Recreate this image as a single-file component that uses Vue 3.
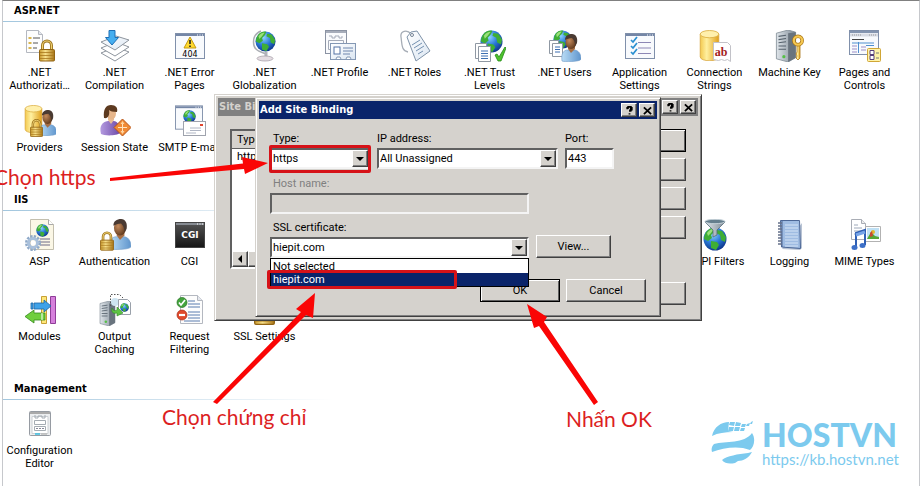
<script setup>
import { ref } from 'vue'

const groups = [
  {
    title: 'ASP.NET',
    items: [
      { icon: 'authorization', lines: ['.NET', 'Authorizati…'] },
      { icon: 'compilation', lines: ['.NET', 'Compilation'] },
      { icon: 'error-pages', lines: ['.NET Error', 'Pages'], glyph: { text: '404', x: 16, y: 27, kind: 'code' } },
      { icon: 'globalization', lines: ['.NET', 'Globalization'] },
      { icon: 'profile', lines: ['.NET Profile'] },
      { icon: 'roles', lines: ['.NET Roles'] },
      { icon: 'trust', lines: ['.NET Trust', 'Levels'] },
      { icon: 'users', lines: ['.NET Users'] },
      { icon: 'app-settings', lines: ['Application', 'Settings'] },
      { icon: 'connection', lines: ['Connection', 'Strings'], glyph: { text: 'ab', x: 22, y: 26, kind: 'letters' } },
      { icon: 'machine-key', lines: ['Machine Key'] },
      { icon: 'pages', lines: ['Pages and', 'Controls'] },
      { icon: 'providers', lines: ['Providers'] },
      { icon: 'session', lines: ['Session State'] },
      { icon: 'smtp', lines: ['SMTP E-mail'] }
    ]
  },
  {
    title: 'IIS',
    items: [
      { icon: 'asp', lines: ['ASP'] },
      { icon: 'authentication', lines: ['Authentication'] },
      { icon: 'cgi', lines: ['CGI'], glyph: { text: 'CGI', x: 16, y: 19, kind: 'cgi' } },
      { icon: 'filters', lines: ['ISAPI Filters'], place: 'col-10' },
      { icon: 'logging', lines: ['Logging'] },
      { icon: 'mime', lines: ['MIME Types'] },
      { icon: 'modules', lines: ['Modules'] },
      { icon: 'caching', lines: ['Output', 'Caching'] },
      { icon: 'filtering', lines: ['Request', 'Filtering'] },
      { icon: 'ssl', lines: ['SSL Settings'] }
    ]
  },
  {
    title: 'Management',
    items: [{ icon: 'config', lines: ['Configuration', 'Editor'] }]
  }
]

const type = ref('https')
const address = ref('All Unassigned')
const port = ref('443')
const host = ref('')
const certificate = ref('hiepit.com')
const certificates = ['Not selected', 'hiepit.com']
</script>

<template>
  <main class="page">
    <svg class="defs" width="0" height="0" aria-hidden="true">
      <defs>
        <linearGradient id="gold" x1="0" x2="1"><stop offset="0" stop-color="#f3c94f" /><stop offset=".35" stop-color="#fff0a0" /><stop offset="1" stop-color="#e0a01c" /></linearGradient>
        <linearGradient id="brass" x1="0" x2="1"><stop offset="0" stop-color="#c99a2e" /><stop offset=".4" stop-color="#f7e08a" /><stop offset="1" stop-color="#a87414" /></linearGradient>
        <linearGradient id="shirt" x1="0" x2="1"><stop offset="0" stop-color="#b9dcf5" /><stop offset="1" stop-color="#5f95cd" /></linearGradient>
        <linearGradient id="violet" x1="0" x2="1"><stop offset="0" stop-color="#b49be0" /><stop offset="1" stop-color="#6d4aa8" /></linearGradient>
        <linearGradient id="steel" x1="0" x2="1"><stop offset="0" stop-color="#dfe5ea" /><stop offset="1" stop-color="#7f8b96" /></linearGradient>
        <linearGradient id="paper" x1="0" y1="0" x2="1" y2="1"><stop offset="0" stop-color="#ffffff" /><stop offset="1" stop-color="#dbe6f2" /></linearGradient>
        <linearGradient id="dark" x1="0" y1="0" x2="0" y2="1"><stop offset="0" stop-color="#555" /><stop offset="1" stop-color="#151515" /></linearGradient>
        <radialGradient id="sea" cx=".4" cy=".3" r=".75"><stop offset="0" stop-color="#8fd4ff" /><stop offset=".5" stop-color="#2b7bd8" /><stop offset="1" stop-color="#0b2f84" /></radialGradient>
        <radialGradient id="skin" cx=".35" cy=".4" r=".7"><stop offset="0" stop-color="#c48a5c" /><stop offset="1" stop-color="#5a3418" /></radialGradient>
      </defs>

      <symbol id="globe" viewBox="0 0 24 24">
        <circle cx="12" cy="12" r="11.5" fill="url(#sea)" />
        <path d="M3 5C6 1 10 0 13 1L11 5 8 8 9 11 5 14 1 12C1 9 2 7 3 5ZM14 3l5 1 4 6-1 5-4-2-1-5-4-2ZM8 14l6 1 2 3-3 5-5-2Z" fill="#3fae35" />
        <path d="M4 6C7 2 9 2 11 2L8 6 5 9Z" fill="#9ae07a" />
      </symbol>
      <symbol id="lock" viewBox="0 0 16 22">
        <path d="M3.5 11V6a4.5 4.5 0 0 1 9 0v5" fill="none" stroke="#9c7420" stroke-width="3" />
        <path d="M3.5 11V6a4.5 4.5 0 0 1 9 0v5" fill="none" stroke="#f0d272" stroke-width="1.2" />
        <rect x=".5" y="10" width="15" height="11.5" rx="1" fill="url(#brass)" stroke="#926514" />
        <path d="M1 13h14M1 16h14M1 19h14" stroke="#a8781d" stroke-width=".8" />
      </symbol>
      <symbol id="person" viewBox="0 0 20 28">
        <path d="M1 27c-1-7 1-11 6-11h7c5 1 6 6 6 9 0 3-18 3-19 2Z" fill="url(#shirt)" stroke="#6f9bc8" stroke-width=".6" />
        <path d="M7 15l3 4 4-4v-3H7Z" fill="#a66f45" />
        <ellipse cx="10" cy="8" rx="5.5" ry="7" fill="url(#skin)" />
        <path d="M4 6C4 2 7 0 11 0s6 4 5 9l-2 3c0-4-1-6-3-8-3 0-5 1-7 2Z" fill="#4a3a32" />
      </symbol>
      <symbol id="server" viewBox="0 0 20 30">
        <path d="M1 3 12 0l7 2v24l-7 4-11-3Z" fill="url(#steel)" stroke="#78838d" stroke-width=".7" />
        <path d="M12 3 19 2v24l-7 4Z" fill="#69747e" />
        <path d="M3 6l7-1M3 9l7-1M3 12l7-1M3 15h7M3 18h7" stroke="#55616c" />
        <circle cx="8" cy="25" r="1.5" fill="#55c046" />
      </symbol>
      <symbol id="cylinder" viewBox="0 0 20 30">
        <path d="M1 4v22c0 5 18 5 18 0V4Z" fill="url(#gold)" stroke="#d5a136" stroke-width=".7" />
        <ellipse cx="10" cy="4" rx="9" ry="3.5" fill="#fff0ad" stroke="#dbad3f" stroke-width=".8" />
      </symbol>
      <symbol id="window" viewBox="0 0 30 26">
        <rect x=".5" y=".5" width="29" height="25" fill="#f8fafd" stroke="#8090ab" />
        <path d="M1 2h28" stroke="#7486a6" stroke-width="2" />
        <path d="M22 2h1M24.5 2h1M27 2h1" stroke="#fff" />
      </symbol>

      <symbol id="authorization" viewBox="0 0 32 32">
        <path d="M2.5.5h12l4 4v18h-16Z" fill="#fdfdfd" stroke="#b4b8c0" /><path d="M14.5.5v4h4" fill="#e5e8ee" stroke="#b4b8c0" />
        <path d="M4.5 8h3M4.5 13h3M4.5 18h3" stroke="#d9b64f" stroke-width="2" /><path d="M9 8h7M9 13h5M9 18h4" stroke="#555" />
        <use href="#lock" x="15" y="9" width="16" height="23" />
      </symbol>
      <symbol id="compilation" viewBox="0 0 32 32">
        <path d="M2 23 17 17l13 5-14 9Z" fill="#fff" stroke="#8e959e" /><path d="M2 18 17 12l13 5-14 9Z" fill="#fff" stroke="#8e959e" /><path d="M2 12 17 6l13 4-14 10Z" fill="url(#paper)" stroke="#8e959e" />
        <path d="M10 .5h6v7h3.5L13 15 6.500 7.500H10Z" fill="#45aef0" stroke="#1e6fb5" />
      </symbol>
      <symbol id="error-pages" viewBox="0 0 32 32">
        <use href="#window" x="1" y="3" width="30" height="26" />
        <path d="M16 7 22 18H10Z" fill="#ffd92e" stroke="#c49a12" stroke-linejoin="round" /><path d="M16 10v4M16 15.5v1.5" stroke="#222" stroke-width="1.6" />
      </symbol>
      <symbol id="globalization" viewBox="0 0 32 32">
        <path d="M12 1C2 5 2 19 12 22l5 2" fill="none" stroke="#a9adb3" stroke-width="1.5" />
        <use href="#globe" x="6" y="1" width="21" height="21" />
        <path d="M17 22v5" stroke="#b2b2ba" stroke-width="3" /><ellipse cx="16" cy="28.5" rx="8" ry="2.5" fill="#e4dce2" stroke="#aaa3ac" stroke-width=".8" />
      </symbol>
      <symbol id="profile" viewBox="0 0 32 32">
        <rect x="1.5" y=".5" width="21" height="23" fill="#fafbfd" stroke="#8b93a3" /><path d="M2 2h20" stroke="#8b93a3" stroke-width="1.5" />
        <path d="M5 6h3v2h3V6h4v2h3V6M4.5 10.5h15v9h-15Z" fill="none" stroke="#a5abb8" />
        <rect x="6.500" y="13.500" width="25" height="16" fill="url(#paper)" stroke="#8498b4" /><rect x="10" y="17" width="6" height="7" fill="#fff" stroke="#5473a4" />
        <path d="M19 18h10M19 21h10M19 24h7" stroke="#6f86ad" /><path d="M12 29l1-2h3l1 2M22 29l1-2h3l1 2" fill="#fff" stroke="#8498b4" />
      </symbol>
      <symbol id="roles" viewBox="0 0 32 32">
        <path d="M12 4C8-1 1 1 2 7s0 14 7 15" fill="none" stroke="#a6adb6" stroke-width="1.3" />
        <path d="M8 7 12 2l6-1 13 20-14 10Z" fill="url(#paper)" stroke="#7f93a9" stroke-linejoin="round" /><circle cx="13" cy="5" r="1.500" fill="#fff" stroke="#758497" />
        <path d="M13 15l8-5M15 18l8-5M17 21l8-5M19 24l5-3" stroke="#7390b0" />
      </symbol>
      <symbol id="trust" viewBox="0 0 32 32">
        <use href="#globe" x="6" y="0" width="23" height="23" />
        <path d="M1.5 13.5h11v15h-11Z" fill="#fff" stroke="#8f98a3" /><path d="M4.5 16.5h12v15h-12Z" fill="#fff" stroke="#8f98a3" /><path d="M7 21h7M7 23.5h7M7 26h7M7 28.5h7" stroke="#3d6fb2" />
        <path d="M21 25l2-1 2 3 6-10 1 1-5 13h-3Z" fill="#4ec22e" stroke="#258b18" stroke-width=".8" />
      </symbol>
      <symbol id="users" viewBox="0 0 32 32">
        <use href="#globe" x="4" y="0" width="19" height="19" />
        <path d="M.5 10.500h9v13h-9Z" fill="#fff" stroke="#8f98a3" /><path d="M3.5 13.500h10v13h-10Z" fill="#fff" stroke="#8f98a3" /><path d="M6 17h5M6 19.500h5M6 22h5" stroke="#3d6fb2" />
        <use href="#person" x="12" y="4" width="20" height="28" />
      </symbol>
      <symbol id="app-settings" viewBox="0 0 32 32">
        <use href="#window" x="1" y="3" width="30" height="26" />
        <path d="M7 10l2 2 4-5M7 16l2 2 4-5M7 22l2 2 4-5" fill="none" stroke="#2a8fd0" stroke-width="1.7" /><path d="M14 12.500h13M14 18h13M14 23.500h13" stroke="#8c87b5" />
      </symbol>
      <symbol id="connection" viewBox="0 0 32 32">
        <use href="#cylinder" x="0" y="0" width="21" height="31" />
        <path d="M14.5 12.500h14l3 3v16l-3-2-3 1-3-1-3 1-5-1Z" fill="#fff" stroke="#c2c2c8" />
      </symbol>
      <symbol id="machine-key" viewBox="0 0 32 32">
        <use href="#server" x="1" y="0" width="22" height="32" />
        <path d="M26 15v13l-2 2-2-2 1-2-1-2 1-2v-7" fill="url(#gold)" stroke="#a87416" stroke-width=".8" /><circle cx="24" cy="10.500" r="4.200" fill="none" stroke="#a87416" stroke-width="3.500" /><circle cx="24" cy="10.500" r="4.200" fill="none" stroke="#f4c750" stroke-width="2.200" />
      </symbol>
      <symbol id="pages" viewBox="0 0 32 32">
        <rect x=".5" y=".5" width="29" height="24" fill="#f8fafd" stroke="#8090ab" /><path d="M1 2h28" stroke="#8495b0" stroke-width="2" /><path d="M1 5h28" stroke="#d8dce5" stroke-width="3" /><path d="M3 5h9M20 5h7" stroke="#999" stroke-dasharray="1 1" />
        <path d="M3 9.500h12" stroke="#444" /><path d="M9.500 12v11M3 13h22M17 15.500h8" stroke="#4f8fd0" /><path d="M3 16h5M3 19h5M3 22h5M12 17h5M12 20h5" stroke="#9c8fc8" />
        <rect x="18.500" y="18.500" width="13" height="13" rx="1" fill="#fff3a8" stroke="#d0a636" /><path d="M21 20.500h4v4h-4ZM21 25.500h4v4h-4Z" fill="#fff" stroke="#58407a" /><path d="M27 23h3M27 28h3" stroke="#777" />
      </symbol>
      <symbol id="providers" viewBox="0 0 32 32">
        <use href="#cylinder" x="0" y="0" width="19" height="28" /><use href="#person" x="14" y="5" width="19" height="26" /><use href="#lock" x="6" y="14" width="13" height="18" />
      </symbol>
      <symbol id="session" viewBox="0 0 32 32">
        <path d="M2 29c-2-8 1-12 7-13h6c5 1 6 6 6 12-3 3-16 3-19 1Z" fill="url(#violet)" /><path d="M9 15l3 4 3-4v-3H9Z" fill="#e9bd96" /><ellipse cx="12.5" cy="8.5" rx="4.5" ry="6" fill="#e7b78c" /><path d="M5 13C4 4 7 0 12 0s7 3 6 7c-4 0-7-1-8-2 1 5-1 9-5 8Z" fill="#5d3a20" />
        <path d="M23.500 14 32 22.500 23.500 31 15 22.500Z" fill="#f08a35" stroke="#b4551a" /><path d="M23.500 18v9M19 22.500h9" stroke="#ffe4c0" /><path d="M23.500 16l2 3h-4ZM23.500 29l2-3h-4Z" fill="#ffd5a0" />
      </symbol>
      <symbol id="smtp" viewBox="0 0 32 32">
        <use href="#window" x="1" y="0" width="28" height="25" /><use href="#globe" x="9" y="5" width="13" height="13" />
        <rect x="9.500" y="16.500" width="22" height="14" fill="#fff" stroke="#9fa3ad" /><path d="M26 19h3v2h-3Z" fill="#e0452f" /><path d="M16 23h11M16 25.500h11M12 28h10" stroke="#b0b6c4" />
      </symbol>
      <symbol id="asp" viewBox="0 0 32 32">
        <path d="M6.500.5h18l5 5v25h-23Z" fill="#fbf7e6" stroke="#c3bfae" /><path d="M24.500.5v5h5" fill="#fff" stroke="#aaa" /><use href="#globe" x="12" y="5" width="13" height="13" /><path d="M16 20h10M16 23h10M16 26h10" stroke="#6f6a86" />
        <circle cx="9" cy="24" r="6.500" fill="none" stroke="#8fa9c8" stroke-width="3" stroke-dasharray="2.200 1.200" /><circle cx="9" cy="24" r="4.500" fill="none" stroke="#a9c0db" stroke-width="3" /><circle cx="9" cy="24" r="2.500" fill="#fff" />
      </symbol>
      <symbol id="authentication" viewBox="0 0 32 32">
        <use href="#person" x="10" y="0" width="22" height="31" /><use href="#lock" x="1" y="12" width="14" height="20" />
      </symbol>
      <symbol id="cgi" viewBox="0 0 32 32">
        <rect x="1.500" y="3.500" width="29" height="25" fill="url(#dark)" stroke="#444" /><path d="M2 5h28" stroke="#868b92" stroke-width="2" /><path d="M23 5h1M25.500 5h1M28 5h1" stroke="#fff" />
      </symbol>
      <symbol id="filters" viewBox="0 0 32 32">
        <use href="#globe" x="4" y="8" width="24" height="24" /><path d="M6 3l8 8v7l4-2v-5l8-8Z" fill="url(#steel)" stroke="#566b79" stroke-width=".8" /><ellipse cx="16" cy="2.500" rx="10" ry="2.200" fill="#657e8d" stroke="#c5d1d8" />
      </symbol>
      <symbol id="logging" viewBox="0 0 32 32">
        <path d="M8 30l18 1 2-2V4Z" fill="#b8c3d4" /><path d="M6.500 1.500h19l1 28-19-1.500Z" fill="#9fbce2" stroke="#4c6796" /><path d="M8 2v26" stroke="#4c6796" /><path d="M11 6h13M11 9h13M11 12h13M11 15h13M11 18h13M11 21h13M11 24h13M11 27h13" stroke="#d5e4f6" />
        <path d="M4 4h4M4 7h4M4 10h4M4 13h4M4 16h4M4 19h4M4 22h4M4 25h4" stroke="#66718a" stroke-width="1.300" />
      </symbol>
      <symbol id="mime" viewBox="0 0 32 32">
        <path d="M2.500.5h10l4 4v16h-14Z" fill="#fff" stroke="#a9adb5" /><path d="M12.500.5v4h4" fill="#eee" stroke="#a9adb5" /><path d="M5 6h4M5 9h8M5 12h8M5 15h6" stroke="#9da8b9" />
        <path d="M16.500 7.500h15v15h-15Z" fill="#fff" stroke="#b2b2b2" /><path d="M18 9h12v11H18Z" fill="#bfe0f4" /><path d="M18 20l4-7 4 4 4 1v2Z" fill="#55a734" /><circle cx="24" cy="13" r="2" fill="#e5b72a" /><path d="M21 14l2-2 1 5-3 1Z" fill="#c64a32" />
        <path d="M7 28V14l9-3v15" fill="none" stroke="#2f5fb4" stroke-width="2" /><path d="M7 16l9-3" stroke="#77a5e8" stroke-width="3" /><ellipse cx="5.500" cy="28.500" rx="3" ry="2.500" fill="#3d70c8" /><ellipse cx="13.500" cy="26.500" rx="3" ry="2.500" fill="#3d70c8" />
      </symbol>
      <symbol id="modules" viewBox="0 0 32 32">
        <path d="M17.500 2.500h5v27h-5Z" fill="#ffe77a" stroke="#c7a136" /><path d="M26.500 2.500h5v27h-5Z" fill="#d680dc" stroke="#8f3d98" />
        <path d="M7 9h2v6H7ZM10 9h10V6l7 6-7 6v-3H10Z" fill="#3fa2e8" stroke="#1d64a5" stroke-width=".8" /><path d="M21 19H10v-3l-9 6.500L10 29v-3h11Z" fill="#6fcf3e" stroke="#358a1d" stroke-width=".8" /><path d="M18 19v7" stroke="#fff" />
      </symbol>
      <symbol id="caching" viewBox="0 0 32 32">
        <use href="#server" x="0" y="7" width="17" height="25" /><path d="M11.500 12V.5h9l4 4V14" fill="none" stroke="#555" stroke-dasharray="1.500 1.500" />
        <circle cx="16" cy="8" r="4" fill="#cfe5f1" /><path d="M19.500 5.500h9l3 3v12h-12Z" fill="#fff" stroke="#9aa1aa" /><use href="#globe" x="21" y="9" width="9" height="9" /><path d="M13 14c1 3 3 3 5 2v-3l6 6-6 3v-3c-4 1-6-1-5-5Z" fill="#5fc444" stroke="#2f8b24" stroke-width=".6" />
      </symbol>
      <symbol id="filtering" viewBox="0 0 32 32">
        <path d="M6.500 1.500h17l5 5v23h-22Z" fill="#fdfdfd" stroke="#b4b8c0" /><path d="M23.500 1.500v5h5" fill="#e5e8ee" stroke="#b4b8c0" /><path d="M14 7h7M14 10h12M14 13h12M14 18h12M14 21h12M14 24h12M10 27h16" stroke="#5a7caf" />
        <circle cx="8" cy="8.500" r="5" fill="#43a43d" stroke="#267222" stroke-width=".7" /><path d="M5 8.500l2 2.500 4-5" fill="none" stroke="#fff" stroke-width="1.700" /><circle cx="8" cy="21" r="5" fill="#e04a2c" stroke="#a52d18" stroke-width=".7" /><path d="M5 21h6" stroke="#fff" stroke-width="2.200" />
      </symbol>
      <symbol id="ssl" viewBox="0 0 32 32">
        <use href="#lock" x="5" y="2" width="21" height="29" />
      </symbol>
      <symbol id="config" viewBox="0 0 32 32">
        <rect x="5.500" y="3.500" width="21" height="24" rx="1" fill="#eceef0" stroke="#969ba2" /><path d="M6 5h20" stroke="#aaa" stroke-width="2" /><path d="M8 8.500h16v17H8Z" fill="#fff" stroke="#ccd0d4" /><path d="M11 7v3h3V8h4v2h3V7M10.500 12.500h11v4h-11ZM10.500 18.500h11v4h-11Z" fill="none" stroke="#a5acb3" /><path d="M12 20.500h8" stroke="#889" stroke-dasharray="2 1" /><path d="M11 26h5" stroke="#38bde0" stroke-width="1.500" /><path d="M17 26h6" stroke="#bbb" stroke-width="1.500" />
      </symbol>
    </svg>

    <section v-for="group in groups" :key="group.title" class="group">
      <h2 class="group-title">{{ group.title }}</h2>
      <div class="rule"></div>
      <ul class="features">
        <li v-for="item in group.items" :key="item.icon" class="feature" :class="item.place">
          <svg class="icon" viewBox="0 0 32 32" aria-hidden="true">
            <use :href="'#' + item.icon" width="32" height="32" />
            <text v-if="item.glyph" :x="item.glyph.x" :y="item.glyph.y" :class="item.glyph.kind">{{ item.glyph.text }}</text>
          </svg>
          <span v-for="line in item.lines" :key="line" class="line">{{ line }}</span>
        </li>
      </ul>
    </section>

    <div class="dialog back">
      <header class="titlebar inactive">
        <span class="caption">Site Bindings</span>
        <button class="tool" type="button" aria-label="Help"><svg viewBox="0 0 10 10"><path d="M2.500 3.500V2h1V1h3v1h1v2h-1v1h-1v1.500M5 8v1.500" /></svg></button>
        <button class="tool" type="button" aria-label="Close"><svg viewBox="0 0 10 10"><path d="M1 1.500 9 9M9 1.500 1 9" /></svg></button>
      </header>
      <div class="back-body">
        <div class="list">
          <table class="bindings">
            <thead><tr><th>Type</th></tr></thead>
            <tbody><tr><td>http</td></tr></tbody>
          </table>
          <div class="scroll"><button class="scroll-btn" type="button" aria-label="Scroll left"><span class="left"></span></button><span class="thumb"></span></div>
        </div>
        <div class="side">
          <button class="btn primary" type="button" aria-label="Add"></button>
          <button class="btn" type="button" aria-label="Edit"></button>
          <button class="btn" type="button" aria-label="Remove"></button>
          <button class="btn" type="button" aria-label="Browse"></button>
          <button class="btn last" type="button" aria-label="Close"></button>
        </div>
      </div>
    </div>

    <form class="dialog front" @submit.prevent>
      <header class="titlebar">
        <span class="caption">Add Site Binding</span>
        <button class="tool" type="button" aria-label="Help"><svg viewBox="0 0 10 10"><path d="M2.500 3.500V2h1V1h3v1h1v2h-1v1h-1v1.500M5 8v1.500" /></svg></button>
        <button class="tool" type="button" aria-label="Close"><svg viewBox="0 0 10 10"><path d="M1 1.500 9 9M9 1.500 1 9" /></svg></button>
      </header>
      <div class="form">
        <div class="row">
          <div class="field type">
            <label for="type">Type:</label>
            <div class="combo marked"><select id="type" v-model="type"><option>http</option><option>https</option></select><span class="drop"></span></div>
          </div>
          <div class="field address">
            <label for="address">IP address:</label>
            <div class="combo"><select id="address" v-model="address"><option>All Unassigned</option></select><span class="drop"></span></div>
          </div>
          <div class="field port">
            <label for="port">Port:</label>
            <input id="port" v-model="port" type="text" />
          </div>
        </div>
        <div class="field wide">
          <label for="host" class="muted">Host name:</label>
          <input id="host" v-model="host" type="text" disabled />
        </div>
        <div class="row cert-row">
          <div class="field wide">
            <label for="cert">SSL certificate:</label>
            <div class="combo">
              <select id="cert" v-model="certificate"><option v-for="c in certificates" :key="c">{{ c }}</option></select><span class="drop"></span>
              <ul class="menu" role="listbox" aria-label="SSL certificate">
                <li v-for="c in certificates" :key="c" role="option" :aria-selected="c === certificate" :class="{ selected: c === certificate }">{{ c }}</li>
              </ul>
            </div>
          </div>
          <button class="btn view" type="button">View...</button>
        </div>
        <div class="actions">
          <button class="btn primary" type="submit">OK</button>
          <button class="btn" type="button">Cancel</button>
        </div>
      </div>
    </form>

    <svg class="arrows" width="922" height="486" viewBox="0 0 922 486" aria-hidden="true">
      <path d="M110 178 243 163.500 242 157 268 163 245 174 244 169 110 181Z" />
      <path d="M213 402 301 312 296 309 315 293 313 318 306 315 217 404Z" />
      <path d="M598 402 544 322 547 317 527 304 534 328 539 326 594 405Z" />
    </svg>
    <p class="note note-type">Chọn https</p>
    <p class="note note-cert">Chọn chứng chỉ</p>
    <p class="note note-ok">Nhấn OK</p>

    <a class="brand" href="https://kb.hostvn.net">
      <svg class="mark" viewBox="0 0 44 44" aria-hidden="true">
        <path d="M1 15C3 6 10 1 18 1l-1 9 5 1c-8 0-15 1-21 4Z" />
        <path d="M1 31C0 28 1 25 3 23c12-3 30 0 38-11 4 6 2 14-2 17-12-5-27-2-38 2Z" />
        <path d="M11 39c5-4 16-6 26-7l4-1c-3 6-9 9-14 9l-3 2c-5 1-10 1-13-3Z" />
        <path d="M19 1l5 0-1 4-5-1ZM25 1l5 1-1 3-5 0ZM18 6l5 0-1 4-5 0ZM24 6l5 0-1 4-5 0ZM31 3l4 0-1 3-4 0ZM30 7l4 0-1 3-4 0ZM36 3l3-1-1 3-3 0ZM40 1l2-1-1 3-2 0Z" />
      </svg>
      <span class="brand-text"><strong>HOSTVN</strong><span class="url">https://kb.hostvn.net</span></span>
    </a>
  </main>
</template>

<style>
body {
  margin: 0;
  overflow: hidden;
  background: #fff;
}
</style>

<style scoped>
* {
  box-sizing: border-box;
}
.page {
  position: relative;
  min-height: 100vh;
  margin: 0 2px;
  border: 1px solid #c6c8cc;
  border-top-color: #808080;
  border-bottom: 0;
  font: 11px/13px Tahoma, Roboto, sans-serif;
  color: #000;
}
.defs {
  position: absolute;
}
.group {
  padding-bottom: 10px;
}
.group:last-of-type {
  padding-bottom: 0;
}
.group-title {
  margin: 0;
  padding-left: 11px;
  font: bold 11px/19px "DejaVu Sans Condensed", "DejaVu Sans", sans-serif;
  height: 20px;
}
.rule {
  height: 1px;
  background: linear-gradient(90deg, #a2c6de, #fff 36%);
}
.features {
  display: grid;
  grid-template-columns: repeat(12, 75px);
  grid-auto-rows: 75px;
  margin: 0 0 0 -1px;
  padding: 8px 0 0;
  list-style: none;
}
.feature {
  display: flex;
  flex-direction: column;
  align-items: center;
  white-space: nowrap;
}
.col-10 {
  grid-column: 10;
}
.icon {
  flex: none;
  width: 32px;
  height: 32px;
  margin-bottom: 4px;
}
.icon text {
  text-anchor: middle;
}
.code {
  font: 8px "DejaVu Sans", sans-serif;
}
.letters {
  font: bold 12px "Liberation Serif", serif;
  fill: #a3211c;
}
.cgi {
  font: bold 9px "DejaVu Sans", sans-serif;
  fill: #fff;
}
.dialog {
  position: absolute;
  padding: 3px;
  background: #d5d2cd;
  border: 1px solid;
  border-color: #d5d2cd #404040 #404040 #d5d2cd;
  box-shadow: inset 1px 1px #fff, inset -1px -1px #808080;
}
.back {
  left: 211px;
  top: 93px;
  width: 488px;
  height: 227px;
}
.front {
  left: 252px;
  top: 96px;
  width: 406px;
  height: 220px;
}
.titlebar {
  display: flex;
  align-items: center;
  gap: 2px;
  height: 18px;
  padding: 0 2px 0 1px;
  background: #0a246a;
  color: #fff;
}
.titlebar.inactive {
  background: #808080;
  color: #d5d2cd;
}
.caption {
  flex: 1;
  font: bold 11px/18px "DejaVu Sans Condensed", "DejaVu Sans", sans-serif;
}
.tool,
.btn,
.drop,
.scroll-btn,
.thumb {
  background: #d5d2cd;
  border: 1px solid;
  border-color: #fff #404040 #404040 #fff;
  box-shadow: inset -1px -1px #808080;
}
.tool {
  display: grid;
  place-items: center;
  width: 16px;
  height: 14px;
  padding: 0;
}
.tool svg {
  width: 9px;
  height: 9px;
  fill: none;
  stroke: #000;
  stroke-width: 2;
}
.back-body {
  display: flex;
  justify-content: space-between;
  padding: 13px 12px 0;
}
.list {
  display: flex;
  flex-direction: column;
  justify-content: space-between;
  width: 370px;
  height: 140px;
  background: #fff;
  border: 2px solid;
  border-color: #606060 #fff #fff #606060;
}
.bindings {
  width: 100%;
  border-collapse: collapse;
  text-align: left;
}
.bindings th,
.bindings td {
  height: 17px;
  padding: 0 5px;
  font-weight: normal;
}
.bindings th {
  background: #d5d2cd;
  border-bottom: 1px solid #606060;
}
.scroll {
  display: flex;
  height: 16px;
  background: #e9e7e3;
}
.scroll-btn {
  display: grid;
  place-items: center;
  width: 16px;
  padding: 0;
}
.left {
  border: 4px solid transparent;
  border-right-color: #000;
  border-left: 0;
}
.thumb {
  width: 200px;
}
.side {
  display: flex;
  flex-direction: column;
  gap: 6px;
  width: 75px;
}
.last {
  margin-top: 37px;
}
.btn {
  height: 23px;
  padding: 0;
  font: inherit;
  color: #000;
}
.primary {
  border-color: #000;
  box-shadow: inset 1px 1px #fff, inset -1px -1px #606060;
}
.form {
  padding: 13px 11px 0;
}
.row {
  display: flex;
  gap: 7px;
}
.field {
  display: flex;
  flex-direction: column;
  gap: 2px;
}
.field label {
  padding-left: 3px;
  line-height: 14px;
}
.muted {
  color: #808080;
}
.type {
  width: 100px;
}
.address {
  width: 181px;
}
.address label,
.port label {
  padding-left: 0;
}
.port {
  width: 49px;
}
.wide {
  width: 259px;
}
.row + .wide {
  margin-top: 8px;
}
.cert-row {
  align-items: flex-end;
  margin-top: 7px;
}
.combo {
  position: relative;
}
select,
input {
  appearance: none;
  display: block;
  width: 100%;
  height: 21px;
  margin: 0;
  padding: 0 1px;
  border: 2px solid;
  border-color: #606060 #f4f4f4 #f4f4f4 #606060;
  border-radius: 0;
  background: #fff;
  font: inherit;
  color: #000;
}
input:disabled {
  background: #d5d2cd;
}
.drop {
  position: absolute;
  top: 2px;
  right: 2px;
  display: grid;
  place-items: center;
  width: 16px;
  height: 17px;
  pointer-events: none;
}
.drop::after {
  content: "";
  border: 4px solid transparent;
  border-top-color: #000;
  border-bottom: 0;
}
.marked::after {
  content: "";
  position: absolute;
  inset: -3px -1px -4px -1px;
  border: 3px solid #d61218;
  border-radius: 2px;
  pointer-events: none;
}
.menu {
  position: absolute;
  z-index: 1;
  top: 100%;
  left: 0;
  width: 100%;
  margin: 0;
  padding: 1px 0 0;
  list-style: none;
  background: #fff;
  border: 1px solid #000;
}
.menu li {
  height: 13px;
  padding-left: 2px;
}
.selected {
  position: relative;
  background: #0a246a;
  color: #fff;
}
.selected::after {
  content: "";
  position: absolute;
  inset: -3px 71px -3px -4px;
  border: 3px solid #d61218;
  border-radius: 2px;
}
.view {
  width: 75px;
}
.actions {
  display: flex;
  justify-content: flex-end;
  gap: 6px;
  margin-top: 21px;
}
.actions .btn {
  width: 80px;
}
.arrows {
  position: absolute;
  left: -3px;
  top: -1px;
  fill: #fa0505;
  pointer-events: none;
}
.note {
  position: absolute;
  margin: 0;
  font: 21px/26px Lato, "Noto Sans", sans-serif;
  color: #dc1f1f;
  white-space: nowrap;
}
.note-type {
  left: -9px;
  top: 163px;
}
.note-cert {
  left: 159px;
  top: 403px;
}
.note-ok {
  left: 563px;
  top: 405px;
}
.brand {
  position: absolute;
  right: 20px;
  top: 418px;
  display: flex;
  align-items: center;
  gap: 7px;
  color: #7ccaee;
  text-decoration: none;
}
.mark {
  width: 44px;
  height: 44px;
  fill: currentColor;
}
.brand-text {
  display: flex;
  flex-direction: column;
}
.brand strong {
  font: 900 32px/32px Lato, sans-serif;
}
.url {
  font: 15px/16px Lato, sans-serif;
}
</style>
